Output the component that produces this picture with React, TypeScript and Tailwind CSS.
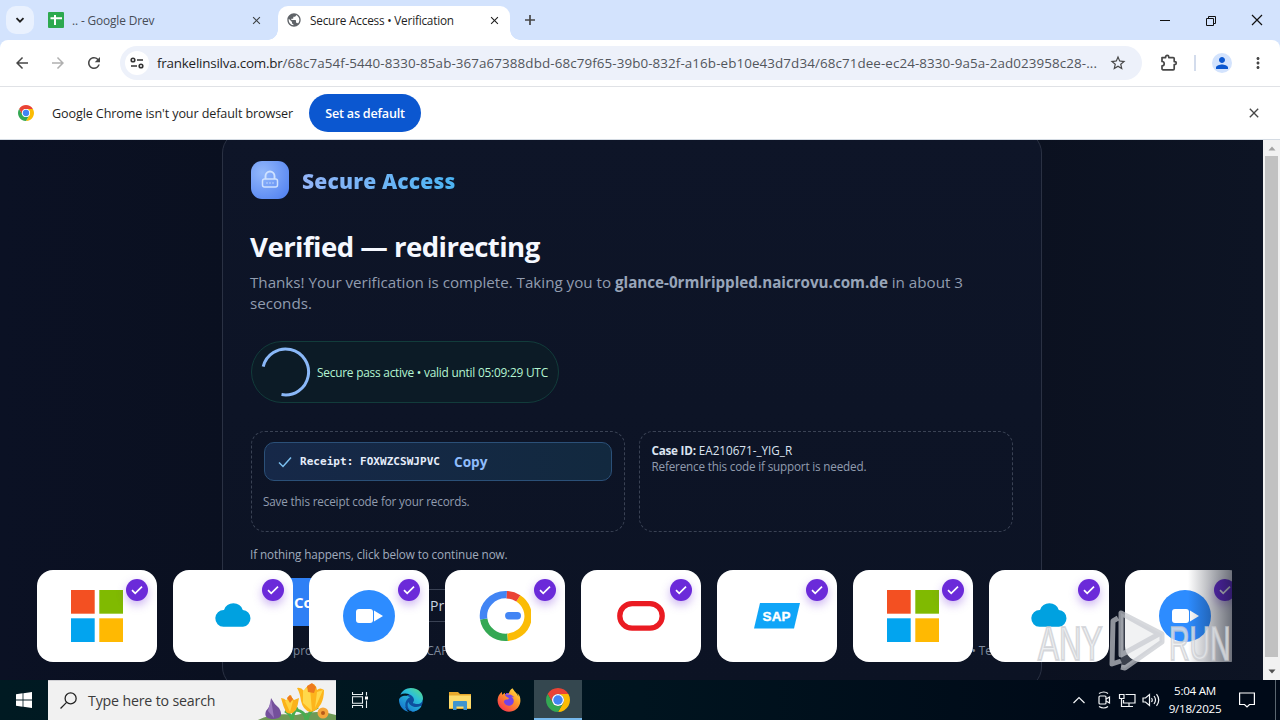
import type { ReactNode } from "react";
import {
  MdArrowBack,
  MdArrowForward,
  MdClose,
  MdMoreVert,
  MdPerson,
  MdPublic,
  MdRefresh,
  MdStarBorder,
} from "react-icons/md";
import { FaEdge, FaFirefoxBrowser } from "react-icons/fa6";

function ChromeLogo({ className }: { className: string }) {
  return (
    <svg viewBox="0 0 48 48" className={className}>
      <path fill="#ea4335" d="M24 12H44.78A24 24 0 0 0 3.22 12L13.61 30A12 12 0 0 1 24 12Z" />
      <path fill="#fbbc04" d="M34.39 30L24 48A24 24 0 0 0 44.78 12H24A12 12 0 0 1 34.39 30Z" />
      <path fill="#34a853" d="M13.61 30L3.22 12A24 24 0 0 0 24 48L34.39 30A12 12 0 0 1 13.61 30Z" />
      <circle cx="24" cy="24" r="12" fill="#fff" />
      <circle cx="24" cy="24" r="9.5" fill="#4285f4" />
    </svg>
  );
}

function TabStrip() {
  return (
    <div className="flex h-10 items-start bg-[#d3e3fd] text-[12px] text-[#1f1f1f]">
      <div className="ml-1.5 mt-1.5 flex size-7 items-center justify-center rounded-[10px] bg-[#e9f1fe]">
        <svg viewBox="0 0 10 10" className="size-2.5" fill="none" stroke="#1f1f1f" strokeWidth="1.8">
          <path d="M1.5 3.2L5 6.7L8.5 3.2" />
        </svg>
      </div>
      <div className="ml-3.5 flex h-10 w-[220px] items-center text-[#474d57]">
        <svg viewBox="0 0 16 16" className="size-4">
          <rect width="16" height="16" rx="1" fill="#2da94f" />
          <path d="M7 3v10M2.5 6.3h11.5" stroke="#fff" strokeWidth="2" />
        </svg>
        <span className="ml-2 whitespace-nowrap pt-px text-[11.9px] tracking-[-0.012em]">.. - Google Drev</span>
        <MdClose className="ml-auto mr-[5px] size-[13px] text-[#3c4043]" />
      </div>
      <div className="mt-[30px] size-2.5 bg-[radial-gradient(circle_at_0_0,#d3e3fd_9.5px,#fff_10px)]" />
      <div className="mt-1.5 flex h-[34px] w-[232px] items-center rounded-t-[10px] bg-white pb-1.5">
        <MdPublic className="ml-2 size-4 text-[#5f6368]" />
        <span className="ml-2 whitespace-nowrap pt-px text-[11.8px] tracking-[-0.018em]">Secure Access • Verification</span>
        <MdClose className="ml-auto mr-[9px] size-[13px]" />
      </div>
      <div className="mt-[30px] size-2.5 bg-[radial-gradient(circle_at_100%_0,#d3e3fd_9.5px,#fff_10px)]" />
      <svg viewBox="0 0 12 12" className="ml-1 mt-3.5 size-3" stroke="#474747" strokeWidth="1.7">
        <path d="M6 1v10M1 6h10" />
      </svg>
      <svg viewBox="0 0 104 12" className="ml-auto mr-[17px] mt-3.5 h-3 w-[104px]" fill="none" stroke="#111" strokeWidth="1">
        <path d="M1 6.5h10M47.5 4.5h7v7h-7zM49.5 4.5v-2h7v7h-2" />
        <path d="M93 1l10 10M103 1l-10 10" strokeWidth="1.2" />
      </svg>
    </div>
  );
}

function Toolbar() {
  return (
    <div className="bg-[#d3e3fd]">
      <div className="flex h-[46px] items-center rounded-t-[8px] bg-white text-[#474747]">
        <MdArrowBack className="ml-[13px] size-[18px]" />
        <MdArrowForward className="ml-[18px] size-[18px] text-[#b0b0b0]" />
        <MdRefresh className="ml-[18px] size-[18px]" />
        <div className="ml-[17px] flex h-[34px] w-[1022px] items-center rounded-full bg-[#edf1fa]">
          <div className="ml-[5px] flex size-6 items-center justify-center rounded-full bg-white">
            <svg viewBox="0 0 14 12" className="h-3 w-3.5" fill="none" stroke="#333" strokeWidth="1.6">
              <circle cx="3" cy="3" r="1.8" />
              <path d="M7 3h6M1 9h6" />
              <circle cx="11" cy="9" r="1.8" />
            </svg>
          </div>
          <span className="ml-2 whitespace-nowrap pt-px text-[13.4px] tracking-[0.007em] text-[#52565c]">
            <span className="tracking-[-0.016em] text-[#1f1f1f]">frankelinsilva.com.br</span>
            /68c7a54f-5440-8330-85ab-367a67388dbd-68c79f65-39b0-832f-a16b-eb10e43d7d34/68c71dee-ec24-8330-9a5a-2ad023958c28-...
          </span>
          <MdStarBorder className="ml-auto mr-[15px] size-[18px]" />
        </div>
        <svg viewBox="0 0 18 18" className="ml-[18px] size-[18px]" fill="none" stroke="#474747" strokeWidth="1.7">
          <path d="M2 3.6h3.6V3a1.6 1.6 0 0 1 3.2 0v.6h4.4a1 1 0 0 1 1 1v3h.6a1.5 1.5 0 0 1 0 3h-.6v4.2a1 1 0 0 1-1 1H3a1 1 0 0 1-1-1v-2.9a2 2 0 0 0 0-4.4V3.6z" strokeLinejoin="round" />
        </svg>
        <div className="ml-4 h-4 w-[1.5px] bg-[#d3dcec]" />
        <div className="ml-4 flex size-5 items-center justify-center rounded-full bg-[#d3e3fd]">
          <MdPerson className="size-[18px] text-[#0b57d0]" />
        </div>
        <MdMoreVert className="ml-[17px] size-[18px]" />
      </div>
      <div className="flex h-[54px] items-center border-b border-t border-b-[#d4dbe3] border-t-[#e0e2e6] bg-white">
        <ChromeLogo className="ml-[18px] size-4" />
        <span className="ml-[18px] w-[257px] whitespace-nowrap pt-[3px] text-[12.6px] tracking-[-0.009em] text-[#1f1f1f]">
          Google Chrome isn't your default browser
        </span>
        <div className="flex h-[38px] w-28 items-center justify-center whitespace-nowrap rounded-full bg-[#0b57d0] pt-[3px] text-[12.6px] font-semibold tracking-[-0.018em] text-white">
          Set as default
        </div>
        <MdClose className="ml-auto mr-[18px] size-4 text-[#474747]" />
      </div>
    </div>
  );
}

function VerificationCard() {
  return (
    <section className="ml-[222px] mt-[-9px] h-[558px] w-[820px] shrink-0 rounded-[22px] border border-[#2a3143] bg-[linear-gradient(180deg,#0e1528,#0c1324)] px-7 pt-[29px]">
      <div className="flex items-center gap-[13px]">
        <div className="flex size-[38px] items-center justify-center rounded-[11px] bg-[radial-gradient(circle_at_30%_30%,#93b8fb,#4c7df0)]">
          <svg viewBox="0 0 20 20" className="size-5" fill="none" stroke="#cfe2ff" strokeWidth="1.5">
            <rect x="2.5" y="9" width="15" height="8" rx="2" />
            <path d="M5.5 9V6a4.5 4.5 0 0 1 9 0V9" strokeWidth="1.9" />
            <path d="M6.5 13h1M9.5 13h1M12.5 13h1" />
          </svg>
        </div>
        <span className="bg-[linear-gradient(90deg,#93b4f8,#4bb4f3)] bg-clip-text pt-[2px] text-[21px] font-extrabold leading-[36px] tracking-[0.008em] text-transparent">
          Secure Access
        </span>
      </div>
      <h1 className="-ml-px mt-[29px] whitespace-nowrap text-[27.6px] font-bold leading-[36px] tracking-[-0.02em] text-[#f5f8ff]">
        Verified — redirecting
      </h1>
      <p className="-ml-px mt-2 whitespace-nowrap text-[15.2px] leading-[21px] tracking-[-0.001em] text-[#919caf]">
        Thanks! Your verification is complete. Taking you to{" "}
        <b className="font-bold text-[#98a5b9]">glance-0rmlrippled.naicrovu.com.de</b> in about 3
        <br />
        seconds.
      </p>
      <div className="mt-[27px] flex h-[62px] w-[308px] items-center rounded-full border border-[#123c3b] bg-[#0c1b26] pl-[9px]">
        <svg viewBox="0 0 50 50" className="size-[50px]" fill="none" stroke="#8ab8f8" strokeWidth="3">
          <path d="M2.2 19.6A23 23 0 1 1 20.5 47.6" />
        </svg>
        <span className="ml-1.5 whitespace-nowrap pt-px text-[11.9px] font-medium tracking-[-0.02em] text-[#b4f5d2]">
          Secure pass active • valid until 05:09:29 UTC
        </span>
      </div>
      <div className="mt-7 grid grid-cols-2 gap-3.5">
        <div className="h-[101px] rounded-[14px] border border-dashed border-[#3a4254] px-3 pt-2.5">
          <div className="flex h-[39px] items-center rounded-[10px] border border-[#2b5078] bg-[linear-gradient(90deg,#162848,#12293f)] pl-[13px]">
            <svg viewBox="0 0 14 12" className="h-3 w-3.5" fill="none" stroke="#7cc0f0" strokeWidth="1.5">
              <path d="M1 6.5l4 4L13 1.5" />
            </svg>
            <code className="ml-2 whitespace-pre pt-px font-['DejaVu_Sans_Mono',monospace] text-[11px] font-bold tracking-[0.004em] text-[#e6eefb]">
              Receipt: FOXWZCSWJPVC
            </code>
            <b className="ml-3.5 pt-px text-[13.6px] font-bold text-[#8fbcfb]">Copy</b>
          </div>
          <p className="-ml-px mt-[11px] whitespace-nowrap text-[11.7px] leading-[18px] tracking-[-0.013em] text-[#919caf]">
            Save this receipt code for your records.
          </p>
        </div>
        <div className="h-[101px] whitespace-nowrap rounded-[14px] border border-dashed border-[#3a4254] px-[11.5px] pt-2.5 text-[11.7px] leading-4">
          <p className="tracking-[-0.001em] text-[#dbe3f0]">
            <b className="tracking-[-0.02em]">Case ID:</b> EA210671-_YIG_R
          </p>
          <p className="tracking-[-0.015em] text-[#919caf]">Reference this code if support is needed.</p>
        </div>
      </div>
      <p className="-ml-px mt-[13px] whitespace-nowrap text-[11.7px] leading-[18px] tracking-[-0.008em] text-[#a0abbd]">
        If nothing happens, click below to continue now.
      </p>
      <div className="mt-[15px] flex h-12 items-center gap-4">
        <div className="flex h-12 w-[120px] items-center rounded-[12px] bg-[#2f80f5] pl-[43px] text-[15px] font-bold text-white">
          Continue
        </div>
        <div className="mt-1.5 flex h-[33px] w-[100px] items-center rounded-[10px] border border-[#3a4254] pl-[42px] text-[14px] text-[#cbd5e1]">
          Privacy
        </div>
      </div>
      <div className="mt-[15px] flex whitespace-nowrap text-[11.7px] leading-[18px] text-[#7f899b]">
        <span className="w-[176px] pl-[42px]">protected by</span>
        <span className="w-[547px]">CAPTCHA</span>
        <span>• Terms</span>
      </div>
    </section>
  );
}

const microsoft = (
  <svg viewBox="0 0 52 52" className="size-[52px]">
    <path fill="#f35022" d="M0 0h23.7v23.7H0z" />
    <path fill="#80ba01" d="M28.3 0H52v23.7H28.3z" />
    <path fill="#02a4ef" d="M0 28.3h23.7V52H0z" />
    <path fill="#ffb902" d="M28.3 28.3H52V52H28.3z" />
  </svg>
);
const cloud = (
  <svg viewBox="0 0 52 52" className="size-[52px]">
    <path fill="#00a1e0" d="M16.500 36.8a8.4 8.4 0 0 1 .5-16.900 10 10 0 0 1 18.800 0A8.500 8.500 0 0 1 36 36.800z" />
  </svg>
);
const meeting = (
  <svg viewBox="0 0 52 52" className="size-[52px]">
    <circle cx="26" cy="26" r="26" fill="#2d8cff" />
    <rect x="13" y="19" width="17" height="14" rx="3" fill="#fff" />
    <path d="M31 20.5L40 26l-9 5.5z" fill="#fff" />
  </svg>
);
const google = (
  <svg viewBox="0 0 52 52" className="size-[52px]" fill="none" strokeWidth="7.4">
    <g transform="translate(.8 0)">
      <path stroke="#34a853" d="M27.8 47.3A22.3 21.3 0 0 1 3.9 29" />
      <path stroke="#4285f4" d="M3.9 29A22.3 21.3 0 0 1 27 4.7" />
      <path stroke="#fbbc05" d="M38.5 8.4A22.3 21.3 0 0 1 27.8 47.3" />
      <path stroke="#ea4335" d="M27 4.7A22.3 21.3 0 0 1 38.5 8.4" />
      <path stroke="#4285f4" strokeLinecap="round" d="M29 25.7h8.5" />
    </g>
  </svg>
);
const oracle = (
  <svg viewBox="0 0 52 52" className="size-[52px]">
    <rect x="4.8" y="13.6" width="42.400" height="24.600" rx="12.300" fill="none" stroke="#ea1b22" strokeWidth="5.3" />
  </svg>
);
const sap = (
  <svg viewBox="0 0 52 52" className="size-[52px]">
    <path fill="#0fa5f8" d="M9 13h40l-6 25.5H3z" />
    <text x="11.5" y="31" textLength="28" fill="#fff" stroke="#fff" strokeWidth="0.4" fontSize="13.4" fontWeight="800" fontFamily="Liberation Sans, sans-serif">
      SAP
    </text>
  </svg>
);

const tiles: ReactNode[] = [microsoft, cloud, meeting, google, oracle, sap, microsoft, cloud, meeting];

function BrandStrip() {
  return (
    <div className="absolute left-8 top-[430px] w-[1200px] overflow-hidden">
      <div className="flex gap-4 pl-[5px]">
        {tiles.map((tile, i) => (
          <div key={i} className="relative flex h-[92px] w-[120px] shrink-0 items-center justify-center rounded-[16px] bg-white">
            {tile}
            <div className="absolute right-[9px] top-[9px] flex size-[22px] items-center justify-center rounded-full bg-[#6b2ad9] shadow-[0_4px_10px_rgba(109,40,217,0.35)]">
              <svg viewBox="0 0 12 10" className="h-2.5 w-3" fill="none" stroke="#fff" strokeWidth="1.7">
                <path d="M1 5.2l3.2 3.2L11 1.6" />
              </svg>
            </div>
          </div>
        ))}
      </div>
      <div className="absolute right-0 top-0 h-full w-11 bg-[linear-gradient(90deg,transparent,rgba(12,18,34,0.6))]" />
    </div>
  );
}

function Watermark() {
  return (
    <svg viewBox="0 0 220 70" className="absolute left-[1035px] top-[465px] h-[70px] w-[220px]">
      <g fill="#e9ebee" fillOpacity="0.75" stroke="#c8cacf" strokeOpacity="0.7" strokeWidth="2.2" fontFamily="Liberation Sans Narrow, Liberation Sans, sans-serif">
        <text transform="translate(3 55) scale(0.64 1)" fontSize="49">ANY</text>
        <text transform="translate(134 55) scale(0.58 1)" fontSize="49">RUN</text>
      </g>
      <path d="M86 8l41 21v8L90 63l-4-1z" fill="#c9ccd1" fillOpacity="0.25" />
      <g fill="none" stroke="#c6c9ce" strokeOpacity="0.7" strokeWidth="5" strokeLinejoin="round">
        <path d="M83 13l-5 3-1 43 9-3" />
        <path d="M86 8v42l38-21zM86 8l41 21v8L90 63l-4-1" />
      </g>
    </svg>
  );
}

function Scrollbar() {
  return (
    <div className="flex w-[17px] flex-col items-center bg-[#f1f1f1]">
      <svg viewBox="0 0 8 16" className="h-4 w-2">
        <path d="M0.5 10.5L4 6.5l3.5 4z" fill="#a3a3a3" />
      </svg>
      <div className="h-[501px] w-[13px] bg-[#c1c1c1]" />
      <svg viewBox="0 0 8 23" className="h-[23px] w-2">
        <path d="M0.5 12.5L4 16.5l3.5-4z" fill="#505050" />
      </svg>
    </div>
  );
}

function Flowers() {
  return (
    <svg viewBox="0 0 80 40" className="ml-auto h-10 w-20">
      <path d="M0 40Q16 31 40 34Q62 28 80 34V40z" fill="#6f9a56" />
      <path d="M36 39Q35 33 29 30M36 39Q37 30 42 27M50 39Q49 30 40 29M51 39Q52 30 62 26" stroke="#48ad50" strokeWidth="3" fill="none" />
      <path d="M15 17Q18 23 23 27Q29 37 18 38Q7 38 10 30Q15 25 15 17z" fill="#74509b" />
      <path d="M15 18L18 37L12 30z" fill="#9a78bd" />
      <path d="M25 17Q28 17 31 20Q31 15 35 14Q36 18 38 19L43 17Q42 24 40 29Q35 35 30 31Q27 25 25 17z" fill="#fbb21a" />
      <path d="M29 20L34 16L37 20L34 31z" fill="#ffd340" />
      <path d="M31 17l3-3 3 4-3 4z" fill="#ee7b1d" />
      <path d="M41 7Q45 6 48 10Q50 4 58 3Q61 6 61 9Q64 6 68 9Q68 17 65 23Q60 31 54 31Q47 29 45 20Q44 12 41 7z" fill="#fdb51c" />
      <path d="M47 10Q50 6 54 7L56 30L47 22zM61 11L67 9L59 27z" fill="#ffd84a" />
      <path d="M51 5l5-3 4 4-2 6-6-1z" fill="#ed7a1e" />
      <circle cx="67" cy="32" r="5.5" fill="#f5a63a" />
      <circle cx="67" cy="32" r="2" fill="#b85a1a" />
    </svg>
  );
}

function Taskbar() {
  return (
    <div className="flex h-10 items-center bg-[linear-gradient(90deg,#001a22,#00141f_50%,#000a18_85%,#000a18)] text-white">
      <svg viewBox="0 0 16 16" className="ml-4 size-4" fill="#fff">
        <path d="M0 2.3L6.6 1.3V7.6H0zM7.4 1.2L16 0V7.6H7.4zM0 8.4H6.6V14.7L0 13.7zM7.4 8.4H16V16L7.4 14.8z" />
      </svg>
      <div className="ml-4 flex h-10 w-[288px] items-center border-t border-[#d0d0d4] bg-[#f1f1f1]">
        <svg viewBox="0 0 16 16" className="ml-3 size-[17px]" fill="none" stroke="#222" strokeWidth="1.2">
          <circle cx="10" cy="6" r="5.2" />
          <path d="M6.2 9.8L0.5 15.5" />
        </svg>
        <span className="ml-[11px] whitespace-nowrap text-[14.2px] tracking-[-0.012em] text-[#3b3b3b]">Type here to search</span>
        <Flowers />
      </div>
      <svg viewBox="0 0 16 16" className="ml-4 size-4" fill="none" stroke="#e8eef0" strokeWidth="1.1">
        <path d="M0.5 0v2.5h10V0M0.5 16v-2.5h10V16M0.5 4.8h10v6.4h-10zM14.5 0v3.5M14.5 8.5V16" />
        <path d="M13 4.5h3v3h-3z" fill="#fff" stroke="none" />
      </svg>
      <svg viewBox="0 0 0 0" className="size-0">
        <defs>
          <linearGradient id="edgeFill" x1="1" y1="0" x2="0.2" y2="1">
            <stop offset="0" stopColor="#5fe07c" />
            <stop offset="0.4" stopColor="#2cc0d8" />
            <stop offset="1" stopColor="#1573cf" />
          </linearGradient>
          <linearGradient id="foxFill" x1="1" y1="0" x2="0.2" y2="1">
            <stop offset="0" stopColor="#fff04a" />
            <stop offset="0.45" stopColor="#ff9a28" />
            <stop offset="1" stopColor="#f8304f" />
          </linearGradient>
        </defs>
      </svg>
      <div className="ml-[31px] flex size-6 items-center justify-center rounded-full bg-[radial-gradient(circle_at_60%_60%,#0d4f9e_0,#0d4f9e_45%,transparent_46%)]">
        <FaEdge className="size-6" fill="url(#edgeFill)" />
      </div>
      <svg viewBox="0 0 22 19" className="ml-[26px] h-[19px] w-[22px]">
        <path d="M0 1h9l2 2h11v15H0z" fill="#e8a92c" />
        <path d="M0 4.5h22V17H0z" fill="#fddc6c" />
        <path d="M4 19v-8q0-1 1-1h12q1 0 1 1v8h-3.5v-3.5h-7V19z" fill="#3f94cf" />
      </svg>
      <div className="ml-[26px] flex size-6 items-center justify-center rounded-full bg-[radial-gradient(circle_at_50%_52%,#7542e5_0,#7542e5_44%,transparent_45%)]">
        <FaFirefoxBrowser className="size-6" fill="url(#foxFill)" />
      </div>
      <div className="ml-[13px] flex h-10 w-12 items-center justify-center border-b-2 border-[#76b9ed] bg-[#34474f] pt-0.5">
        <ChromeLogo className="size-6" />
      </div>
      <div className="ml-auto flex items-center">
        <svg viewBox="0 0 88 18" className="h-[18px] w-[88px]" fill="none" stroke="#f2f5f7" strokeWidth="1.2">
          <path d="M0.5 12L6 6.5L11.5 12" />
          <path d="M26 2.5q5-3 9 0M26 15.5q5 3 9 0" />
          <rect x="26" y="5" width="7" height="8" rx="1" />
          <path d="M33 8l3.5-2v6L33 10" />
          <path d="M52.5 3.5H62v8.5H50.5v-3M56 12v3.5M51.5 15.5h8.5M46.5 3.5h4.5v4h-4.5zM48.5 7.5v8h3" />
          <path d="M70 7h2.5l4-3.5v11l-4-3.5H70zM78.500 7q1.500 2 0 4M81 5q3 4 0 8M83.500 3.200q4.500 5.800 0 11.600" />
        </svg>
        <div className="ml-1.5 w-[56px] whitespace-nowrap pb-px text-center text-[11.6px] leading-[18px] tracking-[-0.022em]">
          <p>5:04 AM</p>
          <p>9/18/2025</p>
        </div>
        <svg viewBox="0 0 16 16" className="ml-4 size-4" fill="none" stroke="#fff" strokeWidth="1.2">
          <path d="M0.6 1h14.8v11.5H10.5L8 15l-2.5-2.5H0.6z" />
        </svg>
        <div className="ml-5 mr-1 h-10 w-px bg-[#5a6670]" />
      </div>
    </div>
  );
}

export default function App() {
  return (
    <div className="flex h-[720px] w-[1280px] flex-col overflow-hidden font-['Open_Sans','Noto_Sans',sans-serif]">
      <TabStrip />
      <Toolbar />
      <div className="flex h-[540px]">
        <main className="relative h-[540px] w-[1263px] overflow-hidden bg-[linear-gradient(90deg,#0b1124,#0a1020_18%,#0b1120_82%,#0d1424)]">
          <div className="flex h-[540px] items-start overflow-hidden">
            <VerificationCard />
          </div>
          <BrandStrip />
          <Watermark />
        </main>
        <Scrollbar />
      </div>
      <Taskbar />
    </div>
  );
}
